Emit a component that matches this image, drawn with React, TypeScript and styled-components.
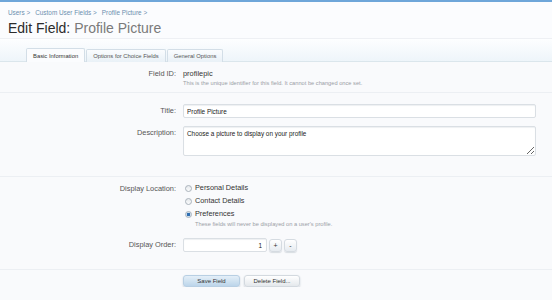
import React from "react";
import styled, { createGlobalStyle } from "styled-components";

const GlobalStyle = createGlobalStyle`
  *{
    box-sizing:border-box;
  }
  body{
    margin:0;
    padding:0;
    font-family:"Liberation Sans", Arial, sans-serif;
    background-color:#f9fafc;
    color:#444;
  }
`;

const TopBar = styled.div`
  height: 2px;
  background-color: #6ea6d9;
`;

const Header = styled.header`
  padding: 6px 8px 0;
  height: 37px;
  border-bottom: 1px solid #eef0f4;
  background-color: #fbfcfe;
`;

const Breadcrumb = styled.div`
  font-size: 6.4px;
  line-height: 9px;
  color: #6c8fae;
  span {
    margin-right: 5px;
  }
`;

const Title = styled.h1`
  margin: 3px 0 0;
  font-size: 14px;
  line-height: 16px;
  font-weight: normal;
  color: #2b2b2b;
  em {
    font-style: normal;
    color: #7a7a7a;
  }
`;

const TabStrip = styled.nav`
  height: 23px;
  padding-left: 26px;
  display: flex;
  align-items: flex-end;
  background: linear-gradient(#fdfeff, #eef5fa);
  border-bottom: 1px solid #dbe6ec;
`;

const Tab = styled.div<{ active?: boolean }>`
  height: ${(p) => (p.active ? 14 : 13)}px;
  margin-right: 1px;
  margin-bottom: -1px;
  padding: 0 6px;
  display: flex;
  align-items: center;
  font-size: 5.85px;
  color: ${(p) => (p.active ? "#333" : "#555")};
  background: ${(p) =>
    p.active ? "#fbfcfe" : "linear-gradient(#fafcfe, #e9f1f7)"};
  border: 1px solid #d3dee7;
  border-bottom: none;
  border-radius: 2px 2px 0 0;
`;

const Section = styled.section<{ pad: string }>`
  padding: ${(p) => p.pad};
  border-bottom: 1px solid #eceff3;
  display: flex;
  flex-direction: column;
`;

const Row = styled.div<{ gap?: number }>`
  display: grid;
  grid-template-columns: 168px 1fr;
  column-gap: 7px;
  padding-left: 8px;
  padding-right: 16px;
  margin-bottom: ${(p) => p.gap ?? 0}px;
`;

const Label = styled.div<{ top?: number }>`
  text-align: right;
  font-size: 7.4px;
  line-height: 10px;
  color: #555;
  padding-top: ${(p) => p.top ?? 0}px;
`;

const Value = styled.div`
  font-size: 7.4px;
  line-height: 10px;
  color: #333;
`;

const Hint = styled.div`
  font-size: 5.7px;
  line-height: 8px;
  color: #9aa0a6;
`;

const TextInput = styled.input`
  display: block;
  width: 100%;
  height: 14px;
  padding: 0 3px;
  font-family: inherit;
  font-size: 6.4px;
  color: #222;
  border: 1px solid #dadfe4;
  border-radius: 2px;
  background: #fff;
  box-shadow: inset 0 1px 1px #eef0f2;
  outline: none;
`;

const TextArea = styled.textarea`
  display: block;
  width: 100%;
  height: 30px;
  padding: 3px;
  font-family: inherit;
  font-size: 6.4px;
  color: #222;
  border: 1px solid #dadfe4;
  border-radius: 2px;
  background: #fff;
  box-shadow: inset 0 1px 1px #eef0f2;
  resize: vertical;
  outline: none;
`;

const RadioList = styled.div`
  display: flex;
  flex-direction: column;
  gap: 3px;
`;

const RadioItem = styled.label`
  display: flex;
  align-items: center;
  gap: 3px;
  font-size: 7.3px;
  line-height: 10px;
  color: #333;
  padding-left: 2px;
`;

const RadioDot = styled.span<{ checked?: boolean }>`
  width: 7px;
  height: 7px;
  border-radius: 50%;
  border: 1px solid #aab3bb;
  background: ${(p) =>
    p.checked
      ? "radial-gradient(circle, #2f6db0 0 1.4px, #c9dced 1.8px, #eef3f7 100%)"
      : "linear-gradient(#e6e9ec, #fafbfc)"};
`;

const RadioHint = styled(Hint)`
  padding-left: 12px;
  margin-top: -2px;
`;

const SpinGroup = styled.div`
  display: flex;
  align-items: center;
  gap: 2px;
`;

const NumberInput = styled(TextInput)`
  width: 84px;
  text-align: right;
  padding-right: 4px;
`;

const SpinButton = styled.button`
  width: 13px;
  height: 13px;
  padding: 0;
  font-family: inherit;
  font-size: 7px;
  line-height: 1;
  color: #333;
  border: 1px solid #d5dbe1;
  border-radius: 3px;
  background: linear-gradient(#ffffff, #e6ebf0);
  box-shadow: 0 1px 1px #d8dde2;
`;

const Actions = styled.div`
  padding: 5px 0 0 183px;
  display: flex;
  gap: 4px;
`;

const Button = styled.button<{ primary?: boolean; w: number }>`
  width: ${(p) => p.w}px;
  height: 12px;
  padding: 0;
  font-family: inherit;
  font-size: 6px;
  color: #333;
  border: 1px solid ${(p) => (p.primary ? "#b8cfe3" : "#d3d9df")};
  border-radius: 3px;
  background: ${(p) =>
    p.primary
      ? "linear-gradient(#e4eff8, #bcd5ea)"
      : "linear-gradient(#ffffff, #e4e8ec)"};
  box-shadow: 0 1px 2px #c9d0d7;
`;

export default function App() {
  return (
    <>
      <GlobalStyle />
      <TopBar />
      <Header>
        <Breadcrumb>
          <span>Users &gt;</span>
          <span>Custom User Fields &gt;</span>
          <span>Profile Picture &gt;</span>
        </Breadcrumb>
        <Title>
          Edit Field: <em>Profile Picture</em>
        </Title>
      </Header>
      <TabStrip>
        <Tab active>Basic Information</Tab>
        <Tab>Options for Choice Fields</Tab>
        <Tab>General Options</Tab>
      </TabStrip>
      <main>
        <Section pad="7px 0 5px">
          <Row>
            <Label>Field ID:</Label>
            <div>
              <Value>profilepic</Value>
              <Hint>This is the unique identifier for this field. It cannot be changed once set.</Hint>
            </div>
          </Row>
        </Section>
        <Section pad="11px 0 20px">
          <Row gap={8}>
            <Label top={2}>Title:</Label>
            <TextInput defaultValue="Profile Picture" />
          </Row>
          <Row>
            <Label top={2}>Description:</Label>
            <TextArea defaultValue="Choose a picture to display on your profile" />
          </Row>
        </Section>
        <Section pad="6px 0 17px">
          <Row gap={10}>
            <Label top={1}>Display Location:</Label>
            <RadioList>
              <RadioItem>
                <RadioDot />
                Personal Details
              </RadioItem>
              <RadioItem>
                <RadioDot />
                Contact Details
              </RadioItem>
              <RadioItem>
                <RadioDot checked />
                Preferences
              </RadioItem>
              <RadioHint>These fields will never be displayed on a user's profile.</RadioHint>
            </RadioList>
          </Row>
          <Row>
            <Label top={2}>Display Order:</Label>
            <SpinGroup>
              <NumberInput defaultValue="1" />
              <SpinButton>+</SpinButton>
              <SpinButton>-</SpinButton>
            </SpinGroup>
          </Row>
        </Section>
        <Actions>
          <Button primary w={57}>
            Save Field
          </Button>
          <Button w={56}>Delete Field...</Button>
        </Actions>
      </main>
    </>
  );
}
